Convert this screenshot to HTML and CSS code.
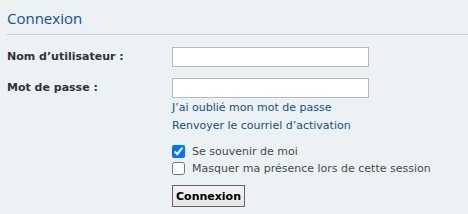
FILE: index.html
```html
<!DOCTYPE html>
<html>
<head lang="fr">
    <meta charset="UTF-8">
    <title>Connexion</title>
    <link rel="stylesheet" href="styles.css">
</head>
<body>
<div class="panel">
    <h2 class="login-title">Connexion</h2>
    <fieldset class="fields">
        <dl class="row">
            <dt><label for="username">Nom d’utilisateur :</label></dt>
            <dd><input type="text" id="username" class="inputbox"></dd>
        </dl>
        <dl class="row row-tight">
            <dt><label for="password">Mot de passe :</label></dt>
            <dd>
                <input type="password" id="password" class="inputbox">
                <div class="links">
                    <a href="javascript:void(0);">J’ai oublié mon mot de passe</a>
                    <a href="javascript:void(0);">Renvoyer le courriel d’activation</a>
                </div>
            </dd>
        </dl>
        <dl class="row row-tight">
            <dt></dt>
            <dd>
                <label class="check"><input type="checkbox" checked> Se souvenir de moi</label>
                <label class="check"><input type="checkbox"> Masquer ma présence lors de cette session</label>
            </dd>
        </dl>
        <dl class="row">
            <dt></dt>
            <dd><button type="button" class="button">Connexion</button></dd>
        </dl>
    </fieldset>
</div>
</body>
</html>
```

FILE: styles.css
```css
html, body {
    margin: 0px;
    padding: 0px;
    background: #ecf1f3;
}

body {
    font-family: "DejaVu Sans", Verdana, sans-serif;
    font-size: 11px;
    color: #333333;
}

.panel {
    padding: 9px 0px 0px 7px;
}

.login-title {
    margin: 0px;
    padding: 0px 0px 6px 0px;
    font-family: "Open Sans", "Liberation Sans", sans-serif;
    font-weight: normal;
    font-size: 15px;
    line-height: 19px;
    color: #115098;
    border-bottom: 1px solid #cccccc;
}

.fields {
    margin: 0px;
    padding: 12px 0px 0px 0px;
    border: none;
}

.row {
    display: flex;
    margin: 0px 0px 11px 0px;
}

.row-tight {
    margin-bottom: 8px;
}

.row dt {
    width: 165px;
    flex: none;
    font-weight: bold;
    line-height: 20px;
}

.row dd {
    margin: 0px;
}

.inputbox {
    display: block;
    box-sizing: border-box;
    width: 197px;
    height: 20px;
    margin: 0px;
    border: 1px solid #b4bac0;
    background: #ffffff;
}

.links {
    padding-top: 1px;
}

.links a {
    display: block;
    line-height: 18px;
    color: #105289;
    text-decoration: none;
}

.check {
    display: flex;
    align-items: center;
    height: 17px;
    color: #4a4a4a;
}

.check input {
    width: 13px;
    height: 13px;
    margin: 0px 7px 0px 0px;
}

.button {
    font-family: "DejaVu Sans", Verdana, sans-serif;
    font-size: 11px;
    font-weight: bold;
    color: #000000;
    height: 22px;
    padding: 0px 3px;
    margin: 0px;
    border: 1px solid #666666;
    background: linear-gradient(#f4f4f4, #e6e6e6);
}
```
